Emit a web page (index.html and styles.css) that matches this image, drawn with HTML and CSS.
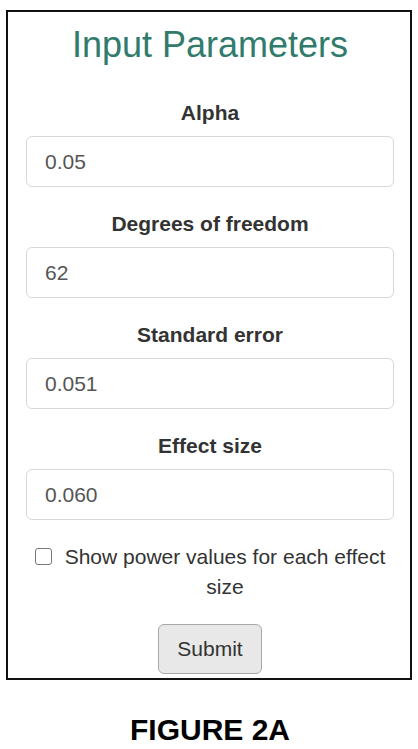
FILE: index.html
```html
<!DOCTYPE html>
<html>
<head>
<meta charset="utf-8">
<link rel="stylesheet" href="styles.css">
</head>
<body>
<div class="frame">
  <h2 class="title">Input Parameters</h2>
  <div class="group">
    <label class="label">Alpha</label>
    <input class="field" type="text" value="0.05">
  </div>
  <div class="group">
    <label class="label">Degrees of freedom</label>
    <input class="field" type="text" value="62">
  </div>
  <div class="group">
    <label class="label">Standard error</label>
    <input class="field" type="text" value="0.051">
  </div>
  <div class="group">
    <label class="label">Effect size</label>
    <input class="field" type="text" value="0.060">
  </div>
  <div class="check">
    <label class="check-label"><input class="box" type="checkbox">Show power values for each effect size</label>
  </div>
  <div class="actions">
    <button class="btn" type="button">Submit</button>
  </div>
</div>
<div class="caption">FIGURE 2A</div>
</body>
</html>
```
FILE: styles.css
```css
* { box-sizing: border-box; }
html, body { margin: 0; padding: 0; background: #fff; }
body {
  font-family: "Liberation Sans", Arial, sans-serif;
  font-size: 21px;
  line-height: 30px;
  color: #333;
  width: 418px;
}
.frame {
  margin: 10px 0 0 6px;
  width: 406px;
  border: 2px solid #111;
  padding: 13px 16px 4px 18px;
}
.title {
  margin: 0 0 33px 0;
  font-size: 36px;
  line-height: 40px;
  font-weight: normal;
  color: #317b6c;
  text-align: center;
}
.group {
  display: flex;
  flex-direction: column;
  margin-bottom: 22px;
}
.label {
  display: block;
  font-weight: bold;
  font-size: 21px;
  line-height: 30px;
  text-align: center;
  margin-bottom: 8px;
  color: #333;
}
.field {
  display: block;
  width: 100%;
  height: 51px;
  padding: 9px 18px;
  font-family: "Liberation Sans", Arial, sans-serif;
  font-size: 21px;
  line-height: 30px;
  color: #555;
  background: #fff;
  border: 1.5px solid #d8d8d8;
  border-radius: 6px;
  outline: none;
}
.check {
  margin-bottom: 22px;
}
.check-label {
  display: block;
  padding-left: 30px;
  text-align: center;
  font-size: 21px;
  line-height: 30px;
  color: #333;
}
.box {
  -webkit-appearance: none;
  appearance: none;
  display: inline-block;
  width: 17px;
  height: 17px;
  margin: 0 13px 0 -30px;
  border: 1.5px solid #777;
  border-radius: 3px;
  background: #fff;
  vertical-align: -1px;
}
.actions {
  display: flex;
  justify-content: center;
}
.btn {
  font-family: "Liberation Sans", Arial, sans-serif;
  font-size: 21px;
  line-height: 30px;
  padding: 9px 18px;
  color: #333;
  background: #e8e8e8;
  border: 1px solid #a8a8a8;
  border-radius: 6px;
}
.caption {
  margin-top: 33px;
  text-align: center;
  font-weight: bold;
  font-size: 30px;
  line-height: 34px;
  color: #000;
  padding-left: 2px;
}
```
